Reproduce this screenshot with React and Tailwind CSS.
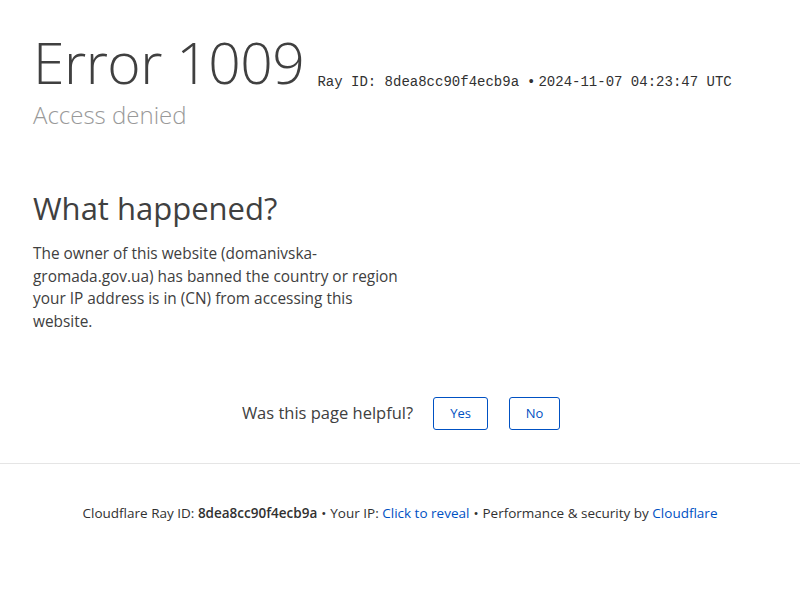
export default function App() {
  const sans = { fontFamily: '"Open Sans", "Noto Sans", sans-serif' };
  return (
    <div className="w-[800px] h-[600px] bg-white text-[#404040]" style={sans}>
      <div className="px-[33px] pt-[26px]">
        <div className="flex items-end">
          <h1 className="text-[57px] leading-[72px] font-light tracking-[-0.5px] text-[#404040]">Error 1009</h1>
          <div className="ml-[13px] mb-[5px] text-[14px] text-[#313131] whitespace-nowrap" style={{ fontFamily: '"Liberation Mono", monospace' }}>
            <span>Ray ID: 8dea8cc90f4ecb9a</span>
            <span className="ml-[8px] mr-[3px]">•</span>
            <span>2024-11-07 04:23:47 UTC</span>
          </div>
        </div>
        <h2 className="text-[24px] leading-[30px] font-light text-[#999] mt-[2px]">Access denied</h2>

        <div className="mt-[58px] w-[372px]">
          <h2 className="text-[31px] leading-[40px] text-[#404040]">What happened?</h2>
          <p className="mt-[15px] text-[15.4px] leading-[22.7px] text-[#404040]">
            The owner of this website (domanivska-gromada.gov.ua) has banned the country or region your IP address is in (CN) from accessing this website.
          </p>
        </div>
      </div>

      <div className="mt-[63px] flex items-center justify-center gap-[20px] pl-[2px]">
        <span className="text-[16.5px] text-[#404040]">Was this page helpful?</span>
        <div className="flex gap-[21px]">
          <button className="w-[55px] h-[33px] border border-[#0051c3] rounded-[3px] text-[13px] text-[#0051c3] bg-white">Yes</button>
          <button className="w-[51px] h-[33px] border border-[#0051c3] rounded-[3px] text-[13px] text-[#0051c3] bg-white">No</button>
        </div>
      </div>

      <div className="mt-[33px] border-t border-[#e5e5e5]" />

      <div className="mt-[39px] text-center text-[13.5px] text-[#313131]">
        <span>Cloudflare Ray ID: <span className="font-semibold">8dea8cc90f4ecb9a</span></span>
        <span className="mx-[4px]">•</span>
        <span>Your IP: <span className="text-[#0051c3]">Click to reveal</span></span>
        <span className="mx-[4px]">•</span>
        <span>Performance &amp; security by <span className="text-[#0051c3]">Cloudflare</span></span>
      </div>
    </div>
  );
}
